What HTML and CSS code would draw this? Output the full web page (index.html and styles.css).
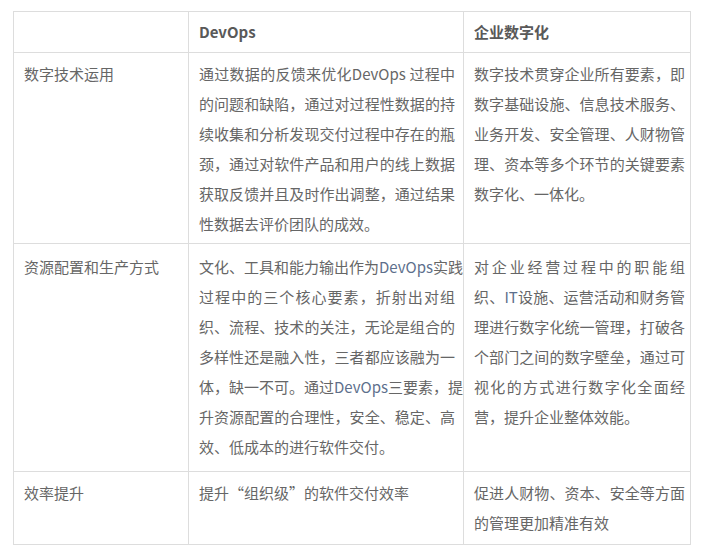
FILE: index.html
```html
<!DOCTYPE html>
<html lang="zh-CN">
<head>
<meta charset="utf-8">
<link rel="stylesheet" href="styles.css">
</head>
<body>
<div class="wrap">
<table class="cmp">
  <colgroup><col class="c1"><col class="c2"><col class="c3"></colgroup>
  <thead>
    <tr class="head"><th></th><th>DevOps</th><th>企业数字化</th></tr>
  </thead>
  <tbody>
    <tr class="r1">
      <td>数字技术运用</td>
      <td class="mid">
        <span class="ln">通过数据的反馈来优化DevOps 过程中</span>
        <span class="ln">的问题和缺陷，通过对过程性数据的持</span>
        <span class="ln">续收集和分析发现交付过程中存在的瓶</span>
        <span class="ln">颈，通过对软件产品和用户的线上数据</span>
        <span class="ln">获取反馈并且及时作出调整，通过结果</span>
        <span class="ln">性数据去评价团队的成效。</span>
      </td>
      <td class="last">
        <span class="ln">数字技术贯穿企业所有要素，即</span>
        <span class="ln">数字基础设施、信息技术服务、</span>
        <span class="ln">业务开发、安全管理、人财物管</span>
        <span class="ln">理、资本等多个环节的关键要素</span>
        <span class="ln">数字化、一体化。</span>
      </td>
    </tr>
    <tr class="r2">
      <td>资源配置和生产方式</td>
      <td class="mid">
        <span class="ln">文化、工具和能力输出作为<span class="lat">DevOps</span>实践</span>
        <span class="ln">过程中的三个核心要素，折射出对组</span>
        <span class="ln">织、流程、技术的关注，无论是组合的</span>
        <span class="ln">多样性还是融入性，三者都应该融为一</span>
        <span class="ln">体，缺一不可。通过<span class="lat">DevOps</span>三要素，提</span>
        <span class="ln">升资源配置的合理性，安全、稳定、高</span>
        <span class="ln">效、低成本的进行软件交付。</span>
      </td>
      <td class="last">
        <span class="ln">对企业经营过程中的职能组</span>
        <span class="ln">织、<span class="lat">IT</span>设施、运营活动和财务管</span>
        <span class="ln">理进行数字化统一管理，打破各</span>
        <span class="ln">个部门之间的数字壁垒，通过可</span>
        <span class="ln">视化的方式进行数字化全面经</span>
        <span class="ln">营，提升企业整体效能。</span>
      </td>
    </tr>
    <tr class="r3">
      <td>效率提升</td>
      <td class="mid">提升“组织级”的软件交付效率</td>
      <td class="last">
        <span class="ln">促进人财物、资本、安全等方面</span>
        <span class="ln">的管理更加精准有效</span>
      </td>
    </tr>
  </tbody>
</table>
</div>
</body>
</html>
```
FILE: styles.css
```css
html, body {
  margin: 0;
  padding: 0;
  background: #ffffff;
}
.wrap {
  padding: 11px 13px 0 13px;
}
.cmp {
  border-collapse: collapse;
  table-layout: fixed;
  width: 677px;
  font-family: "Noto Sans CJK SC", "Noto Sans", sans-serif;
  font-size: 15px;
  line-height: 30px;
  color: #666666;
}
.c1 { width: 175px; }
.c2 { width: 275px; }
.c3 { width: 227px; }
.cmp th,
.cmp td {
  border: 1px solid #dddddd;
  padding: 6px 10px 4px 10px;
  text-align: left;
  vertical-align: top;
  white-space: nowrap;
}
.cmp th {
  padding: 5px 10px;
  font-weight: 700;
  color: #595959;
}
.cmp td.mid {
  padding-right: 8px;
}
.cmp td.last,
.cmp th:last-child {
  padding-right: 5px;
}
.r2 td {
  padding-top: 8px;
  padding-bottom: 9px;
}
.r3 td {
  padding-top: 6px;
  padding-bottom: 6px;
}
.ln {
  display: block;
  white-space: nowrap;
  text-align: justify;
  text-align-last: justify;
}
.ln:last-child {
  text-align-last: auto;
}
.lat {
  color: #5d6f8c;
}
```
